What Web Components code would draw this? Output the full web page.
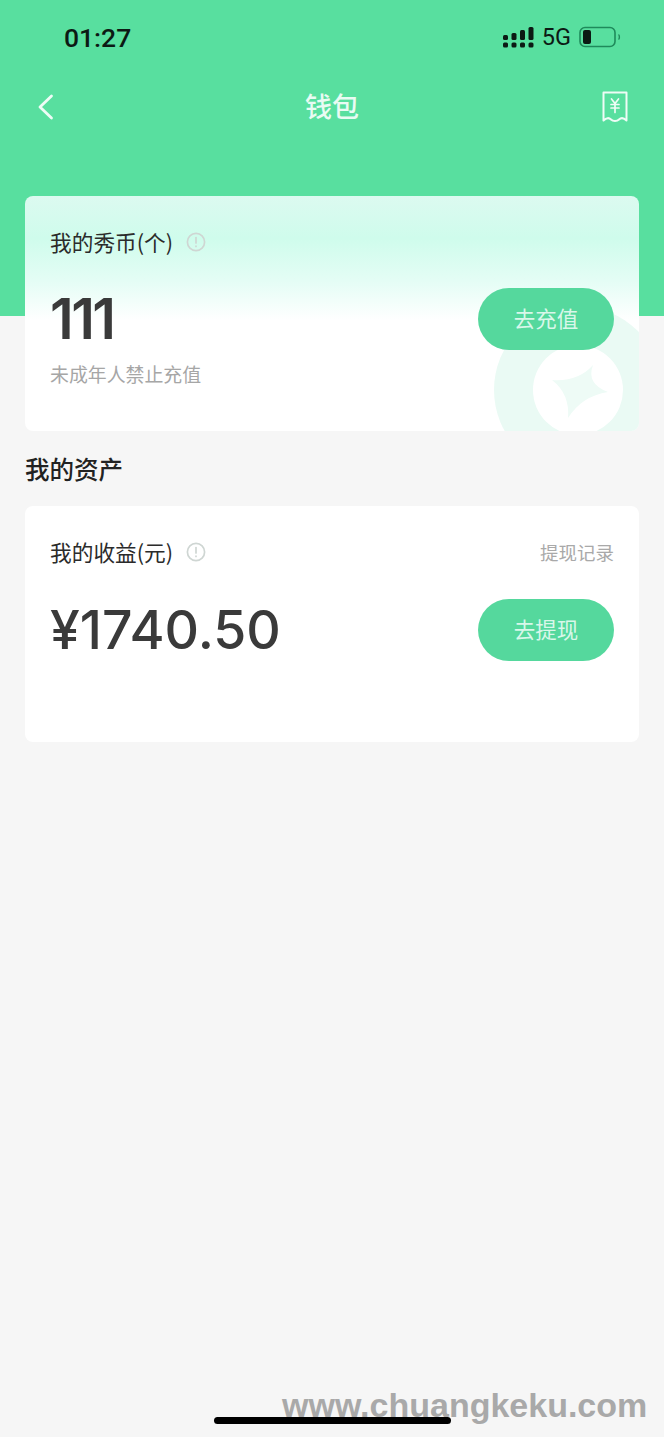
<!DOCTYPE html>
<html lang="zh">
<head>
<meta charset="utf-8">
<title>钱包</title>
<style>
html, body {
  margin: 0;
  padding: 0;
}
body {
  font-family: "Noto Sans CJK SC", "Liberation Sans", sans-serif;
}
</style>
</head>
<body>
<wallet-page></wallet-page>

<script>
const cjk = '"Noto Sans CJK SC", sans-serif';

class StatusBar extends HTMLElement {
  constructor() {
    super();
    this.attachShadow({ mode: "open" });
    this.shadowRoot.innerHTML = `
<style>
:host {
  display: flex;
  justify-content: space-between;
  align-items: center;
  height: 74px;
  padding: 0 43px 0 64px;
  color: #0c1a14;
  font-family: Roboto, "Liberation Sans", sans-serif;
}
.time {
  font-size: 26.5px;
  font-weight: 500;
}
.right {
  display: flex;
  align-items: center;
  gap: 8px;
}
.net {
  font-size: 23.5px;
  font-weight: 400;
}
svg {
  display: block;
}
</style>
<span class="time">01:27</span>
<div class="right">
  <svg width="31" height="21" viewBox="0 0 31 21" fill="#0c1a14">
    <rect x="0" y="8" width="5" height="5" rx="1.5"/>
    <rect x="0" y="15.5" width="5" height="5" rx="1.5"/>
    <rect x="8.5" y="6" width="5" height="7" rx="1.5"/>
    <rect x="8.5" y="15.5" width="5" height="5" rx="1.5"/>
    <rect x="17" y="3" width="5" height="10" rx="1.5"/>
    <rect x="17" y="15.5" width="5" height="5" rx="1.5"/>
    <rect x="25.5" y="0" width="5" height="13" rx="1.5"/>
    <rect x="25.5" y="15.5" width="5" height="5" rx="1.5"/>
  </svg>
  <span class="net">5G</span>
  <svg width="42" height="22" viewBox="0 0 42 22">
    <rect x="1" y="1.5" width="35" height="19" rx="5" fill="none" stroke="#1f8a5b" stroke-width="1.6"/>
    <rect x="4" y="4" width="8" height="14" rx="2" fill="#0c1a14"/>
    <path d="M39.5 8.5c1.2 .8 1.2 4.2 0 5" fill="none" stroke="#1f8a5b" stroke-width="1.4"/>
  </svg>
</div>`;
  }
}

class NavBar extends HTMLElement {
  constructor() {
    super();
    this.attachShadow({ mode: "open" });
    this.shadowRoot.innerHTML = `
<style>
:host {
  display: grid;
  grid-template-columns: 1fr auto 1fr;
  align-items: center;
  height: 66px;
  padding: 0 35px;
  color: #e9fbf3;
}
.title {
  padding-bottom: 2px;
  font-family: ${cjk};
  font-size: 27px;
  font-weight: 500;
  line-height: 38px;
}
svg {
  display: block;
}
.back {
  margin-left: 2px;
}
.bill {
  justify-self: end;
}
</style>
<svg class="back" width="17" height="28" viewBox="0 0 17 28" fill="none" stroke="#eefcf6" stroke-width="2.8" stroke-linecap="round" stroke-linejoin="round">
  <path d="M14.5 3 L3 14 L14.5 25"/>
</svg>
<span class="title"><slot></slot></span>
<svg class="bill" width="27" height="32" viewBox="0 0 27 32" fill="none" stroke="#eefcf6" stroke-width="2" stroke-linejoin="round" stroke-linecap="round">
  <path d="M1.5 1.5 H24.5 V29.5 C21.5 26.5 19 26.5 17 28.5 C15 30.5 11 30.5 9 28.5 C7 26.5 4.5 26.5 1.5 29.5 Z"/>
  <path d="M9.5 8 L13 12.5 L16.5 8 M9 13.5 H17 M9 17 H17 M13 12.5 V21.5" stroke-width="1.7"/>
</svg>`;
  }
}

class InfoIcon extends HTMLElement {
  constructor() {
    super();
    this.attachShadow({ mode: "open" });
    this.shadowRoot.innerHTML = `
<style>
:host {
  display: block;
  width: 20px;
  height: 20px;
  margin-top: 2px;
}
svg {
  display: block;
}
</style>
<svg width="20" height="20" viewBox="0 0 20 20" fill="none" stroke="#cfd6d3" stroke-width="1.7" stroke-linecap="round">
  <circle cx="10" cy="10" r="8.6"/>
  <path d="M10 5.5 V11"/>
  <path d="M10 14.2 V14.4"/>
</svg>`;
  }
}

class PillButton extends HTMLElement {
  constructor() {
    super();
    this.attachShadow({ mode: "open" });
    this.shadowRoot.innerHTML = `
<style>
:host {
  display: flex;
  justify-content: center;
  align-items: center;
  flex: none;
  box-sizing: border-box;
  width: 136px;
  height: 62px;
  padding-bottom: 3px;
  border-radius: 31px;
  background: #55d89d;
  color: #d9f7ea;
  font-family: ${cjk};
  font-size: 21.5px;
}
</style>
<slot></slot>`;
  }
}

class WalletCard extends HTMLElement {
  constructor() {
    super();
    this.attachShadow({ mode: "open" });
    this.shadowRoot.innerHTML = `
<style>
:host {
  display: block;
  position: relative;
  overflow: hidden;
  box-sizing: border-box;
  height: 236px;
  margin: 0 25px;
  padding: 29px 25px 0;
  border-radius: 8px;
  background: #fff;
}
:host([tinted]) {
  height: 235px;
  background: linear-gradient(180deg, #dcfaf0 0%, #cffcec 18%, #e4fdf5 36%, #ffffff 53%);
}
.deco {
  display: none;
  position: absolute;
  right: 0;
  bottom: 0;
}
:host([tinted]) .deco {
  display: block;
}
.top, .main {
  position: relative;
  display: flex;
  align-items: center;
}
.top {
  height: 32px;
  color: #2b2b2b;
  font-family: ${cjk};
  font-size: 21.7px;
  gap: 13px;
}
.aside {
  margin-left: auto;
  padding-top: 2px;
  color: #a9a9a9;
  font-size: 18.5px;
}
.main {
  justify-content: space-between;
  margin-top: 32px;
  height: 62px;
}
:host([tinted]) .main {
  margin-top: 31px;
}
.note {
  position: relative;
  margin-top: 10px;
  color: #a6a6a6;
  font-family: ${cjk};
  font-size: 18.9px;
  line-height: 28px;
}
</style>
<svg class="deco" width="145" height="127" viewBox="0 0 145 127">
  <circle cx="84" cy="86" r="84" fill="#eafaf4"/>
  <circle cx="84" cy="86" r="45" fill="#fff"/>
  <path d="M58 76 Q84 78 99 61 Q92 80 114 88 Q88 92 74 114 Q76 90 58 76 Z" fill="#eefbf6"/>
</svg>
<div class="top">
  <slot name="label"></slot>
  <info-icon></info-icon>
  <span class="aside"><slot name="aside"></slot></span>
</div>
<div class="main">
  <slot name="amount"></slot>
  <slot name="action"></slot>
</div>
<div class="note"><slot name="note"></slot></div>`;
  }
}

class AmountText extends HTMLElement {
  constructor() {
    super();
    this.attachShadow({ mode: "open" });
    this.shadowRoot.innerHTML = `
<style>
:host {
  display: block;
  color: #3a3a3a;
  font-family: Inter, "Liberation Sans", sans-serif;
  font-size: 53.5px;
  line-height: 62px;
  font-weight: 500;
}
:host([bold]) {
  font-weight: 600;
  font-size: 56px;
  letter-spacing: -2.5px;
}
</style>
<slot></slot>`;
  }
}

class WalletPage extends HTMLElement {
  constructor() {
    super();
    this.attachShadow({ mode: "open" });
    this.shadowRoot.innerHTML = `
<style>
:host {
  display: block;
  position: relative;
  height: 1437px;
  overflow: hidden;
  background: linear-gradient(180deg, #58df9f 316px, #f6f6f6 316px);
}
.spacer {
  height: 56px;
}
h2 {
  margin: 20px 25px 20px;
  color: #222;
  font-family: ${cjk};
  font-size: 24.5px;
  font-weight: 500;
  line-height: 35px;
}
.watermark {
  position: absolute;
  left: 282px;
  top: 1385px;
  color: #a9a9a9;
  font-family: "Liberation Sans", sans-serif;
  font-size: 34px;
  font-weight: 700;
  line-height: 40px;
  white-space: nowrap;
}
.home {
  position: absolute;
  left: 214px;
  top: 1417px;
  width: 237px;
  height: 7px;
  border-radius: 4px;
  background: #000;
}
</style>
<status-bar></status-bar>
<nav-bar>钱包</nav-bar>
<div class="spacer"></div>
<wallet-card tinted>
  <span slot="label">我的秀币(个)</span>
  <amount-text slot="amount" bold>111</amount-text>
  <pill-button slot="action">去充值</pill-button>
  <span slot="note">未成年人禁止充值</span>
</wallet-card>
<h2>我的资产</h2>
<wallet-card>
  <span slot="label">我的收益(元)</span>
  <span slot="aside">提现记录</span>
  <amount-text slot="amount">¥1740.50</amount-text>
  <pill-button slot="action">去提现</pill-button>
</wallet-card>
<div class="watermark">www.chuangkeku.com</div>
<div class="home"></div>`;
  }
}

customElements.define("status-bar", StatusBar);
customElements.define("nav-bar", NavBar);
customElements.define("info-icon", InfoIcon);
customElements.define("pill-button", PillButton);
customElements.define("amount-text", AmountText);
customElements.define("wallet-card", WalletCard);
customElements.define("wallet-page", WalletPage);
</script>
</body>
</html>
